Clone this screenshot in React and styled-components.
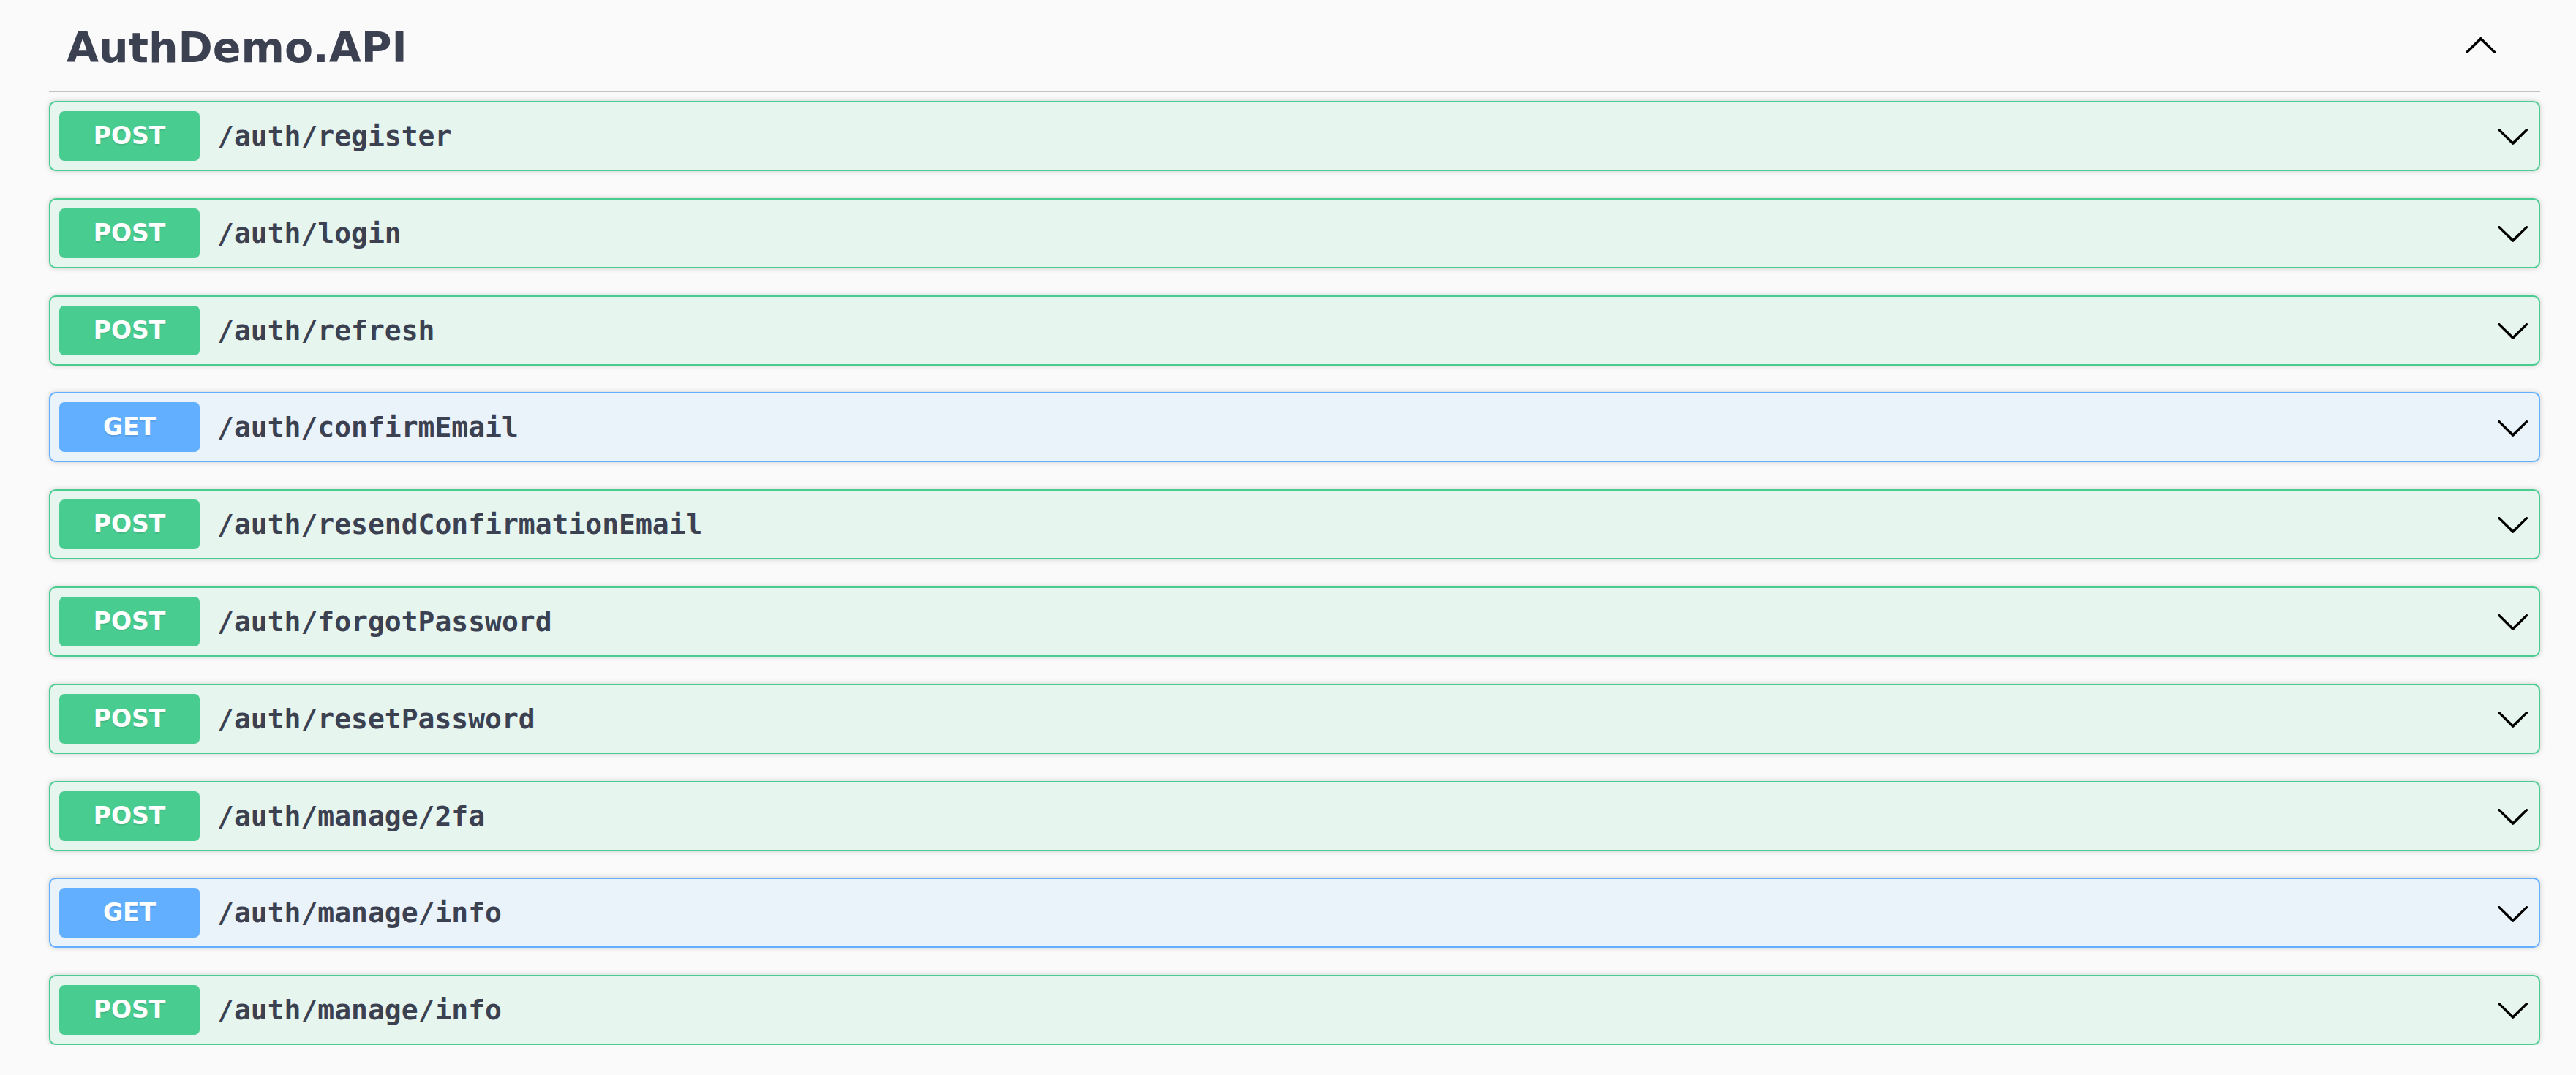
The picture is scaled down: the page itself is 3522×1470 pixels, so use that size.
import React from 'react';
import styled, { createGlobalStyle } from 'styled-components';

const GlobalStyle = createGlobalStyle`
  html, body {
    margin: 0;
    padding: 0;
    background: #fafafa;
  }
  body {
    font-family: "DejaVu Sans", "Liberation Sans", sans-serif;
    color: #3b4151;
  }
`;

const METHOD_COLORS = {
  POST: { main: '#49cc90', tint: 'rgba(73, 204, 144, 0.1)' },
  GET: { main: '#61affe', tint: 'rgba(97, 175, 254, 0.1)' }
};

const operations = [
  { method: 'POST', path: '/auth/register' },
  { method: 'POST', path: '/auth/login' },
  { method: 'POST', path: '/auth/refresh' },
  { method: 'GET', path: '/auth/confirmEmail' },
  { method: 'POST', path: '/auth/resendConfirmationEmail' },
  { method: 'POST', path: '/auth/forgotPassword' },
  { method: 'POST', path: '/auth/resetPassword' },
  { method: 'POST', path: '/auth/manage/2fa' },
  { method: 'GET', path: '/auth/manage/info' },
  { method: 'POST', path: '/auth/manage/info' }
];

const Page = styled.div`
  padding: 0 49px 0 67px;
`;

const TagHeader = styled.div`
  display: flex;
  align-items: center;
  justify-content: space-between;
  height: 118px;
  padding: 6px 58px 0 24px;
  border-bottom: 2px solid rgba(59, 65, 81, 0.3);
  margin-bottom: 12px;
`;

const TagTitle = styled.h3`
  margin: 0;
  font-family: "DejaVu Sans", sans-serif;
  font-size: 57px;
  font-weight: 700;
  line-height: 66px;
  color: #3b4151;
`;

const ToggleButton = styled.button`
  display: flex;
  align-items: center;
  justify-content: center;
  padding: 0;
  margin: 0 0 8px;
  border: none;
  background: none;
  cursor: pointer;
`;

const OperationList = styled.div`
  display: flex;
  flex-direction: column;
  gap: 36.8px;
`;

const OperationBlock = styled.div`
  display: flex;
  align-items: center;
  height: 96px;
  box-sizing: border-box;
  padding: 0 12px;
  border: 2px solid ${(p) => METHOD_COLORS[p.$method].main};
  border-radius: 9px;
  background: ${(p) => METHOD_COLORS[p.$method].tint};
  box-shadow: 0 0 7px rgba(0, 0, 0, 0.19);
`;

const MethodBadge = styled.span`
  flex: none;
  width: 192px;
  height: 68px;
  display: flex;
  align-items: center;
  justify-content: center;
  border-radius: 7px;
  background: ${(p) => METHOD_COLORS[p.$method].main};
  color: #fff;
  font-family: "DejaVu Sans", sans-serif;
  font-size: 33px;
  font-weight: 700;
  line-height: 38px;
  text-shadow: 0 2px 0 rgba(0, 0, 0, 0.1);
`;

const OperationPath = styled.span`
  flex: 1;
  padding: 0 24px;
  font-family: "DejaVu Sans Mono", "Liberation Mono", monospace;
  font-size: 38px;
  font-weight: 700;
  line-height: 44px;
  color: #3b4151;
`;

const Arrow = styled.svg`
  flex: none;
  width: 47.5px;
  height: 47.5px;
  fill: #000;
`;

const ArrowDown = () => (
  <Arrow viewBox="0 0 20 20" aria-hidden="true">
    <path d="M17.418 6.109c.272-.268.709-.268.979 0s.271.701 0 .969l-7.908 7.83c-.27.268-.707.268-.979 0l-7.908-7.83c-.27-.268-.27-.701 0-.969.271-.268.709-.268.979 0L10 13.25l7.418-7.141z" />
  </Arrow>
);

const ArrowUp = () => (
  <Arrow viewBox="0 0 20 20" aria-hidden="true">
    <path d="M17.418 14.908c.272.268.709.268.979 0s.271-.701 0-.969l-7.908-7.83c-.27-.268-.707-.268-.979 0l-7.908 7.83c-.27.268-.27.701 0 .969.271.268.709.268.979 0L10 7.767l7.418 7.141z" />
  </Arrow>
);

const Operation = ({ method, path }) => (
  <OperationBlock $method={method}>
    <MethodBadge $method={method}>{method}</MethodBadge>
    <OperationPath>{path}</OperationPath>
    <ArrowDown />
  </OperationBlock>
);

const App = () => {
  return (
    <Page>
      <GlobalStyle />
      <TagHeader>
        <TagTitle>AuthDemo.API</TagTitle>
        <ToggleButton aria-label="Collapse operations">
          <ArrowUp />
        </ToggleButton>
      </TagHeader>

      <OperationList>
        {operations.map((op, idx) => (
          <Operation key={idx} method={op.method} path={op.path} />
        ))}
      </OperationList>
    </Page>
  );
};

export default App;
